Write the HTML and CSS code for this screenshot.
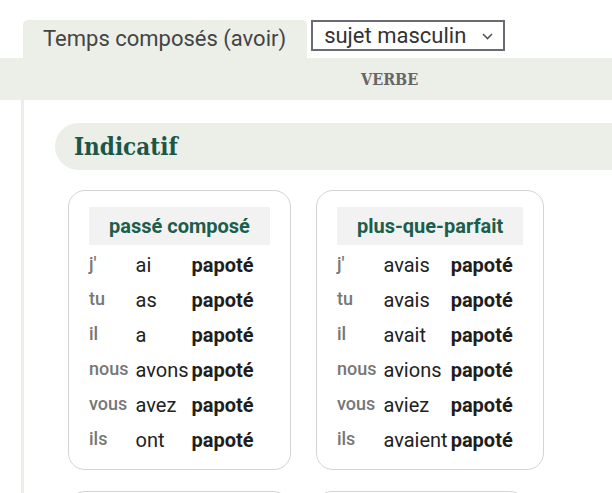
FILE: index.html
```html
<!DOCTYPE html>
<html lang="fr">
<head>
<meta charset="utf-8">
<title>Conjugaison papoter</title>
<link rel="stylesheet" href="styles.css">
</head>
<body>
<div class="top">
  <div class="tab">Temps composés (avoir)</div>
  <div class="select">
    <span>sujet masculin</span>
    <svg class="chev" width="11" height="7" viewBox="0 0 11 7"><path d="M1 1 L5.5 5.5 L10 1" fill="none" stroke="#555" stroke-width="1.6"/></svg>
  </div>
</div>
<div class="band"><span class="band-label">VERBE</span></div>
<main class="content">
  <h2 class="mode">Indicatif</h2>
  <div class="cards">
    <section class="card">
      <div class="conj">
        <div class="th">passé composé</div>
        <span class="pr">j'</span><span class="aux">ai</span><b class="pp">papoté</b>
        <span class="pr">tu</span><span class="aux">as</span><b class="pp">papoté</b>
        <span class="pr">il</span><span class="aux">a</span><b class="pp">papoté</b>
        <span class="pr">nous</span><span class="aux">avons</span><b class="pp">papoté</b>
        <span class="pr">vous</span><span class="aux">avez</span><b class="pp">papoté</b>
        <span class="pr">ils</span><span class="aux">ont</span><b class="pp">papoté</b>
      </div>
    </section>
    <section class="card">
      <div class="conj">
        <div class="th">plus-que-parfait</div>
        <span class="pr">j'</span><span class="aux">avais</span><b class="pp">papoté</b>
        <span class="pr">tu</span><span class="aux">avais</span><b class="pp">papoté</b>
        <span class="pr">il</span><span class="aux">avait</span><b class="pp">papoté</b>
        <span class="pr">nous</span><span class="aux">avions</span><b class="pp">papoté</b>
        <span class="pr">vous</span><span class="aux">aviez</span><b class="pp">papoté</b>
        <span class="pr">ils</span><span class="aux">avaient</span><b class="pp">papoté</b>
      </div>
    </section>
    <section class="card">
      <div class="conj">
        <div class="th">passé antérieur</div>
        <span class="pr">j'</span><span class="aux">eus</span><b class="pp">papoté</b>
      </div>
    </section>
    <section class="card">
      <div class="conj">
        <div class="th">futur antérieur</div>
        <span class="pr">j'</span><span class="aux">aurai</span><b class="pp">papoté</b>
      </div>
    </section>
  </div>
</main>
</body>
</html>
```

FILE: styles.css
```css
html, body {
  margin: 0;
  padding: 0;
  overflow: hidden;
  background: #fff;
}
body {
  font-family: Roboto, "Liberation Sans", sans-serif;
  color: #222;
}
.top {
  display: flex;
  align-items: flex-start;
  padding: 20px 0 0 23px;
}
.tab {
  background: #eceee8;
  border-radius: 5px 5px 0 0;
  height: 38px;
  line-height: 38px;
  padding: 0 21px 0 20px;
  font-size: 22px;
  color: #444;
}
.select {
  margin-left: 4px;
  height: 27px;
  border: 2px solid #6b6b78;
  display: flex;
  align-items: center;
  justify-content: space-between;
  padding: 0 10px 0 11px;
  box-sizing: content-box;
  width: 169px;
  font-size: 22px;
  color: #333;
}
.select span { line-height: 27px; }
.chev { margin-top: 1px; }
.band {
  background: #eceee8;
  height: 42px;
  display: flex;
  align-items: center;
  padding-left: 361px;
}
.band-label {
  font-family: "DejaVu Serif Condensed", "DejaVu Serif", serif;
  font-weight: bold;
  font-size: 16px;
  color: #666;
}
.content {
  margin-left: 21px;
  border-left: 3px solid #eceee8;
  padding: 23px 0 0 31px;
  min-height: 600px;
}
.mode {
  margin: 0;
  height: 47px;
  line-height: 47px;
  background: #eceee8;
  border-radius: 24px 0 0 24px;
  padding-left: 19px;
  font-family: "DejaVu Serif Condensed", "DejaVu Serif", serif;
  font-weight: bold;
  font-size: 24px;
  color: #1b5746;
}
.cards {
  display: flex;
  flex-wrap: wrap;
  gap: 21px 25px;
  margin: 20px 0 0 13px;
}
.card {
  border: 1px solid #d4d4d4;
  border-radius: 17px;
  padding: 16px 20px 11px;
}
.conj {
  display: grid;
  grid-template-columns: auto auto 1fr;
  grid-template-rows: auto;
  grid-auto-rows: 35px;
}
.th {
  grid-column: 1 / 4;
  height: 38px;
  line-height: 38px;
  background: #f2f2f2;
  padding: 0 20px;
  text-align: center;
  font-weight: bold;
  font-size: 20px;
  color: #1b5e4b;
  margin-bottom: 3px;
}
.pr {
  font-size: 18px;
  font-weight: 500;
  color: #777;
  line-height: 32px;
  padding-right: 7px;
}
.aux {
  font-size: 20px;
  line-height: 35px;
  color: #222;
  padding-right: 3px;
}
.pp {
  font-size: 20px;
  line-height: 35px;
  font-weight: bold;
  color: #1e1e1e;
}
```
